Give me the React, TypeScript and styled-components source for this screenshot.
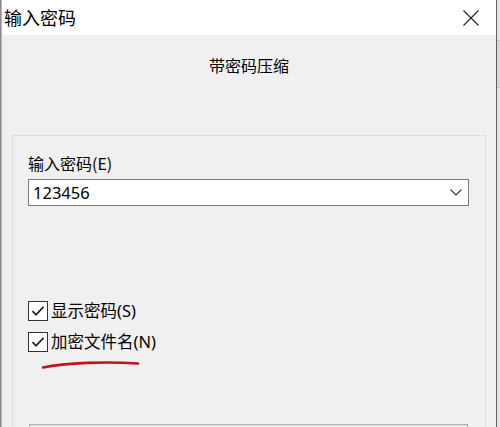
import React from "react";
import styled, { createGlobalStyle } from "styled-components";

const Global = createGlobalStyle`
  html, body { margin: 0; padding: 0; background: #f0f0f0; }
  body { font-family: "Noto Sans", "Noto Sans CJK SC", sans-serif; color: #000; }
`;

const Screen = styled.div`
  display: flex;
  width: 500px;
  height: 427px;
  overflow: hidden;
`;

const LeftEdge = styled.div`
  width: 2px;
  flex: none;
  background: linear-gradient(to right, #8c8c8c 0 1px, #b5b5b5 1px 2px);
`;

const Dialog = styled.div`
  width: 494px;
  flex: none;
  display: flex;
  flex-direction: column;
`;

const RightEdge = styled.div`
  flex: 1;
  display: flex;
  background: #e4e4e4;
  border-left: 1px solid #5e5e5e;
`;

const TitleBar = styled.div`
  height: 35px;
  flex: none;
  background: #fff;
  display: flex;
  align-items: center;
  justify-content: space-between;
  padding: 0 17px 0 2px;
`;

const Title = styled.div`
  font-family: "Noto Sans CJK SC", sans-serif;
  font-size: 18px;
  line-height: 24px;
  color: #000;
  margin-top: -1px;
`;

const CloseButton = styled.div`
  width: 16px;
  height: 16px;
  display: flex;
  margin-top: 1px;
`;

const Body = styled.div`
  flex: 1;
  background: #f0f0f0;
  display: flex;
  flex-direction: column;
  padding-top: 19px;
`;

const Subtitle = styled.div`
  text-align: center;
  font-family: "Noto Sans CJK SC", sans-serif;
  font-size: 16px;
  line-height: 22px;
`;

const GroupBox = styled.div`
  margin: 59px 10px 0 10px;
  border: 1px solid #dcdcdc;
  border-bottom: none;
  padding: 16px 15px 0 15px;
  flex: 1;
  display: flex;
  flex-direction: column;
`;

const FieldLabel = styled.div`
  font-size: 16px;
  line-height: 22px;
  font-family: "Noto Sans CJK SC", sans-serif;
`;

const Combo = styled.div`
  margin-top: 5px;
  height: 25px;
  border: 1px solid #7a7a7a;
  background: #fff;
  display: flex;
  align-items: center;
  justify-content: space-between;
  padding: 0 6px 0 4px;
  margin-right: 1px;
`;

const ComboText = styled.span`
  font-family: "Noto Sans", sans-serif;
  font-size: 16.5px;
  line-height: 22px;
`;

const Checks = styled.div`
  margin-top: 95px;
  display: flex;
  flex-direction: column;
  gap: 11px;
`;

const CheckRow = styled.label`
  display: flex;
  align-items: center;
  gap: 3px;
  height: 20px;
`;

const Box = styled.span`
  width: 18px;
  height: 18px;
  border: 1px solid #333;
  background: #fff;
  display: flex;
  align-items: center;
  justify-content: center;
`;

const CheckText = styled.span`
  font-size: 16.5px;
  line-height: 22px;
  font-family: "Noto Sans", "Noto Sans CJK SC", sans-serif;
`;

const Scribble = styled.svg`
  display: block;
  margin-top: 6px;
  margin-left: -2px;
`;

const BottomControl = styled.div`
  margin-top: 54px;
  height: 30px;
  border: 1px solid #adadad;
  background: #e6e6e6;
  margin-right: 2px;
  margin-left: 1px;
`;

const BehindStrip = styled.div`
  flex: 1;
  margin-top: 40px;
  height: 46px;
  border-top: 1px solid #c8c8c8;
  border-bottom: 1px solid #c8c8c8;
  background: #d8d8d8;
`;

function Check() {
  return (
    <Box>
      <svg width="14" height="12" viewBox="0 0 14 12">
        <path d="M1.5 6.2 L5 9.8 L12.5 1.8" fill="none" stroke="#222" strokeWidth="1.8" />
      </svg>
    </Box>
  );
}

export default function App() {
  return (
    <>
      <Global />
      <Screen>
        <LeftEdge />
        <Dialog>
          <TitleBar>
            <Title>输入密码</Title>
            <CloseButton>
              <svg width="16" height="16" viewBox="0 0 16 16">
                <path d="M0.5 0.5 L15.5 15.5 M15.5 0.5 L0.5 15.5" stroke="#222" strokeWidth="1.1" />
              </svg>
            </CloseButton>
          </TitleBar>
          <Body>
            <Subtitle>带密码压缩</Subtitle>
            <GroupBox>
              <FieldLabel>输入密码(E)</FieldLabel>
              <Combo>
                <ComboText>123456</ComboText>
                <svg width="12" height="7" viewBox="0 0 12 7">
                  <path d="M0.5 0.5 L6 6 L11.5 0.5" fill="none" stroke="#333" strokeWidth="1.1" />
                </svg>
              </Combo>
              <Checks>
                <CheckRow>
                  <Check />
                  <CheckText>显示密码(S)</CheckText>
                </CheckRow>
                <CheckRow>
                  <Check />
                  <CheckText>加密文件名(N)</CheckText>
                </CheckRow>
              </Checks>
              <Scribble width="120" height="12" viewBox="0 0 120 12">
                <path
                  d="M17 9.5 C 40 4.5, 80 3.5, 112 5.5"
                  fill="none"
                  stroke="#c0141c"
                  strokeWidth="2.6"
                  strokeLinecap="round"
                />
              </Scribble>
              <BottomControl />
            </GroupBox>
          </Body>
        </Dialog>
        <RightEdge>
          <BehindStrip />
        </RightEdge>
      </Screen>
    </>
  );
}
